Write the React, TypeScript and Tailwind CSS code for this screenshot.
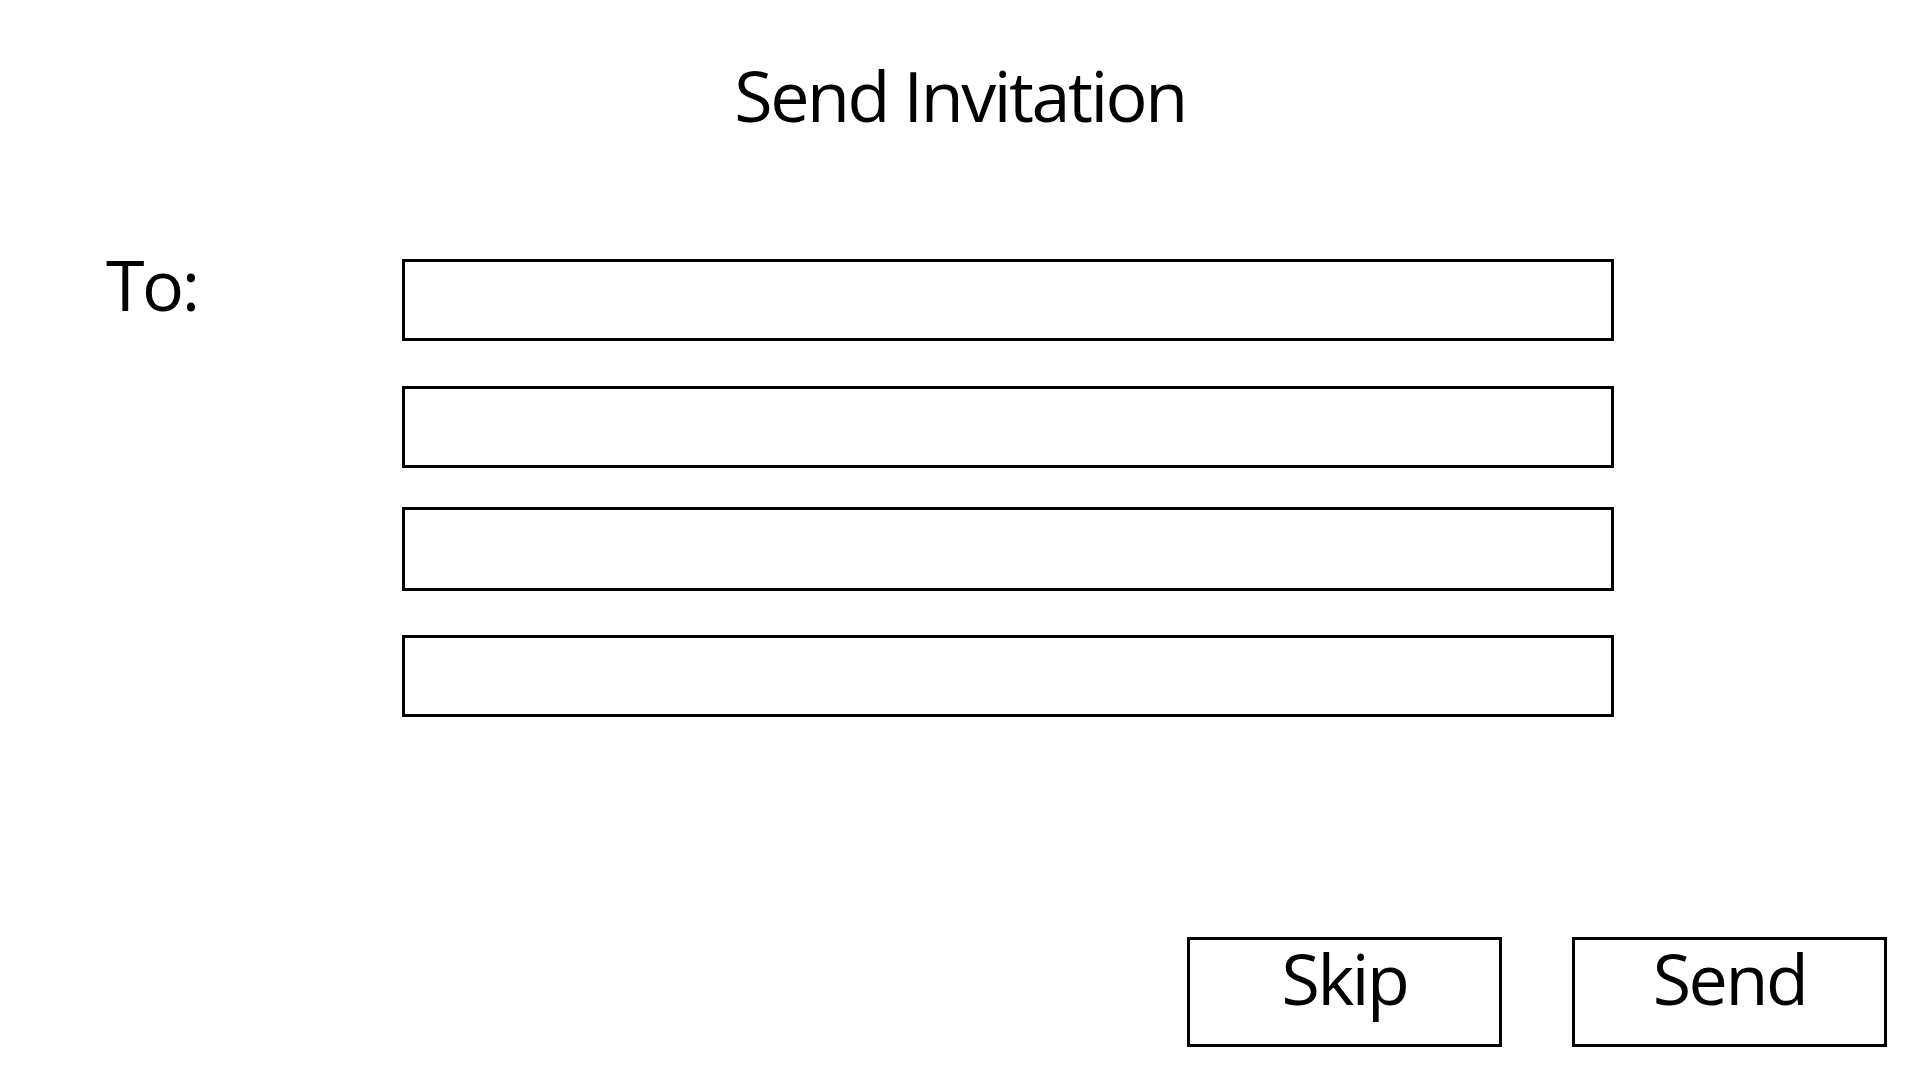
export default function App() {
  const fields = ["mt-0 h-[82px]", "mt-[45px] h-[82px]", "mt-[39px] h-[84px]", "mt-[44px] h-[82px]"];
  const btn =
    "w-[315px] h-[110px] border-[3px] border-black pt-[3px] flex justify-center items-start text-[70px] leading-none tracking-[-0.035em]";

  return (
    <div className="w-[1920px] h-[1080px] bg-white text-black font-['Open_Sans',sans-serif] overflow-hidden">
      <h1 className="pt-[60px] text-center text-[70px] leading-none font-normal tracking-[-0.035em]">
        Send Invitation
      </h1>

      <div className="mt-[119px] flex items-start">
        <p className="ml-[106px] w-[296px] text-[70px] leading-none tracking-[-0.035em]">To:</p>
        <div className="mt-[10px] flex flex-col">
          {fields.map((cls, i) => (
            <div key={i} className={`w-[1212px] border-[3px] border-black ${cls}`} />
          ))}
        </div>
      </div>

      <div className="mt-[220px] flex justify-end gap-[70px] pr-[33px]">
        <button className={btn}>Skip</button>
        <button className={btn}>Send</button>
      </div>
    </div>
  );
}
